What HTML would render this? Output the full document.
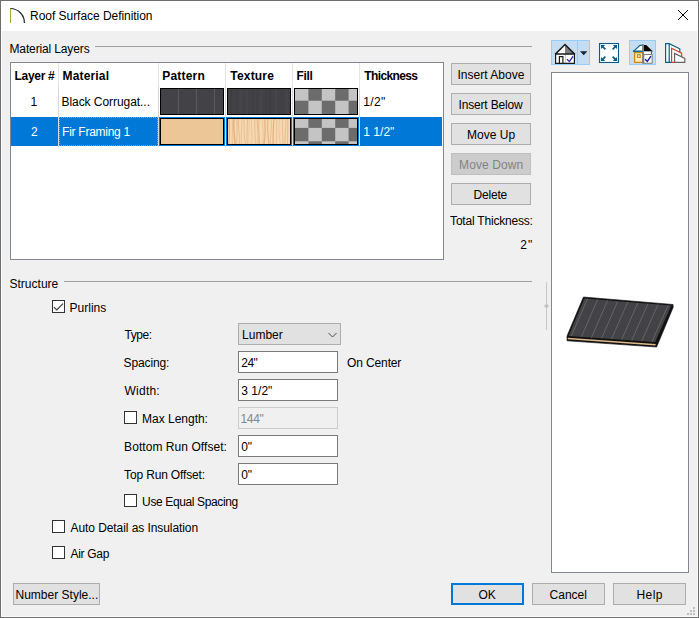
<!DOCTYPE html>
<html lang="en"><head><meta charset="utf-8"><title>Roof Surface Definition</title>
<style>
html,body{margin:0;padding:0;}
body{width:699px;height:618px;overflow:hidden;background:#f0f0f0;font:12px 'Liberation Sans',sans-serif;color:#000;position:relative;}
.win{position:absolute;left:0;top:0;width:697px;height:616px;border:1px solid #6e6e6e;background:#f0f0f0;}
.abs,.t,.win div,.win span,.win svg{position:absolute;}
.titlebar{left:1px;top:1px;width:697px;height:30px;background:#fff;}
.t{white-space:pre;line-height:14px;height:14px;font-size:12px;color:#000;}
.t.b{font-weight:bold;}
.t.w{color:#fff;}
.t.dis{color:#838383;}
.t.gr{color:#878787;}
.hline{height:1px;background:#a0a0a0;}
.btn{background:#e1e1e1;border:1px solid #adadad;box-sizing:border-box;}
.btn.dis{background:#cccccc;border-color:#bfbfbf;}
.btn.def{border:2px solid #0078d7;}
.inp{background:#fff;border:1px solid #7a7a7a;box-sizing:border-box;}
.inp.dis{background:#f0f0f0;border-color:#cccccc;}
.cb{width:13px;height:13px;box-sizing:border-box;border:1px solid #333;background:#fff;}
.table{left:10px;top:62px;width:434px;height:198px;box-sizing:border-box;border:1px solid #828790;background:#fff;}
.vl{width:1px;background:#d8d8d8;}
.sel{background:#0078d7;}
.sw{box-sizing:border-box;border:1px solid #000;width:64px;height:27px;overflow:hidden;}
.prev{left:551px;top:72px;width:138px;height:501px;box-sizing:border-box;border:1px solid #828790;background:#fff;}
.tb{box-sizing:border-box;background:#c5ddf2;border:1px solid #98ccf6;}
</style></head>
<body>
<div class="win">
<div class="root" style="left:-1px;top:-1px;width:699px;height:618px">
<div class="inset" style="left:1px;top:31px;width:695px;height:585px;border:1px solid #fcfcfc;border-top:none;border-right-color:#f8f8f8"></div>
<div class="titlebar">
</div>
<svg style="left:8px;top:6px" width="20" height="20" viewBox="0 0 20 20"><line x1="2.5" y1="3" x2="2.5" y2="17" stroke="#9ab72c" stroke-width="1"/><path d="M2.3 2.5 A14.2 14.2 0 0 1 16.4 17" fill="none" stroke="#2b2b2b" stroke-width="1.25"/></svg>
<span class="t " id="t_title" style="left:30.10px;top:9px;letter-spacing:-0.045px">Roof Surface Definition</span>
<svg style="left:677px;top:9px" width="12" height="12" viewBox="0 0 12 12"><path d="M1 1 L11 11 M11 1 L1 11" stroke="#000" stroke-width="1" fill="none"/></svg>
<span class="t " id="t_ml" style="left:9.50px;top:42px;letter-spacing:-0.136px">Material Layers</span>
<div class="hline" style="left:95px;top:46px;width:437px"></div>
<div class="table">
<div class="sel" style="left:0;top:54px;width:431px;height:29px"></div>
<div class="vl" style="left:47px;top:0;width:1px;height:24px;background:#e5e5e5"></div>
<div class="vl" style="left:47px;top:24px;width:1px;height:60px"></div>
<div class="vl" style="left:147px;top:0;width:1px;height:24px;background:#e5e5e5"></div>
<div class="vl" style="left:147px;top:24px;width:1px;height:60px"></div>
<div class="vl" style="left:214px;top:0;width:1px;height:24px;background:#e5e5e5"></div>
<div class="vl" style="left:214px;top:24px;width:1px;height:60px"></div>
<div class="vl" style="left:281px;top:0;width:1px;height:24px;background:#e5e5e5"></div>
<div class="vl" style="left:281px;top:24px;width:1px;height:60px"></div>
<div class="vl" style="left:348px;top:0;width:1px;height:24px;background:#e5e5e5"></div>
<div class="vl" style="left:348px;top:24px;width:1px;height:60px"></div>
<div class="focus" style="left:48px;top:54px;width:99px;height:29px;box-sizing:border-box;border:1px dotted #f58a2c"></div>
<div class="sw" style="left:149px;top:25px;background:#434246"><svg width="62" height="25" style="left:0;top:0"><path d="M17.5 0V25M35.5 0V25M53.5 0V25" stroke="#5c5b5c" stroke-width="1"/></svg></div>
<div class="sw" style="left:216px;top:25px;background:#424145"><svg style="left:0;top:0" width="62" height="25" viewBox="0 0 62 25"><rect width="62" height="25" fill="#424145"/><rect x="2" y="0" width="2" height="25" fill="#3e3d41"/><rect x="8" y="0" width="2" height="25" fill="#403f43"/><rect x="12" y="0" width="2" height="25" fill="#464549"/><rect x="18" y="0" width="2" height="25" fill="#464549"/><rect x="24" y="0" width="2" height="25" fill="#403f43"/><rect x="28" y="0" width="2" height="25" fill="#403f43"/><rect x="32" y="0" width="2" height="25" fill="#464549"/><rect x="37" y="0" width="2" height="25" fill="#403f43"/><rect x="41" y="0" width="2" height="25" fill="#3e3d41"/><rect x="47" y="0" width="2" height="25" fill="#464549"/><rect x="53" y="0" width="2" height="25" fill="#403f43"/><rect x="58" y="0" width="2" height="25" fill="#464549"/></svg></div>
<div class="sw" style="left:283px;top:25px"><svg style="left:0;top:0" width="62" height="25" viewBox="0 0 62 25"><rect width="62" height="25" fill="#c4c4c4"/><rect x="0.0" y="-15.1" width="13.4" height="13.4" fill="#6c6c6c"/><rect x="26.8" y="-15.1" width="13.4" height="13.4" fill="#6c6c6c"/><rect x="53.6" y="-15.1" width="13.4" height="13.4" fill="#6c6c6c"/><rect x="-13.4" y="-1.7" width="13.4" height="13.4" fill="#6c6c6c"/><rect x="13.4" y="-1.7" width="13.4" height="13.4" fill="#6c6c6c"/><rect x="40.2" y="-1.7" width="13.4" height="13.4" fill="#6c6c6c"/><rect x="67.0" y="-1.7" width="13.4" height="13.4" fill="#6c6c6c"/><rect x="0.0" y="11.7" width="13.4" height="13.4" fill="#6c6c6c"/><rect x="26.8" y="11.7" width="13.4" height="13.4" fill="#6c6c6c"/><rect x="53.6" y="11.7" width="13.4" height="13.4" fill="#6c6c6c"/><rect x="-13.4" y="25.1" width="13.4" height="13.4" fill="#6c6c6c"/><rect x="13.4" y="25.1" width="13.4" height="13.4" fill="#6c6c6c"/><rect x="40.2" y="25.1" width="13.4" height="13.4" fill="#6c6c6c"/><rect x="67.0" y="25.1" width="13.4" height="13.4" fill="#6c6c6c"/><rect x="0.0" y="38.5" width="13.4" height="13.4" fill="#6c6c6c"/><rect x="26.8" y="38.5" width="13.4" height="13.4" fill="#6c6c6c"/><rect x="53.6" y="38.5" width="13.4" height="13.4" fill="#6c6c6c"/></svg></div>
<div class="sw" style="left:149px;top:55px;background:#ecc697"></div>
<div class="sw" style="left:216px;top:55px;background:#f4d6ae"><svg style="left:0;top:0" width="62" height="25" viewBox="0 0 62 25"><rect width="62" height="25" fill="#f5d9b2"/><path d="M0.8 -1 C1.9 7 1.7 15 0.7 26" stroke="#e8b888" stroke-width="1.3" fill="none"/><path d="M4.0 -1 C5.0 7 3.9 15 4.3 26" stroke="#eabb8b" stroke-width="0.9" fill="none"/><path d="M6.2 -1 C5.0 7 6.3 15 7.1 26" stroke="#e2ab78" stroke-width="1.3" fill="none"/><path d="M9.0 -1 C9.5 7 9.4 15 8.2 26" stroke="#edc396" stroke-width="1.3" fill="none"/><path d="M10.9 -1 C9.5 7 12.2 15 11.2 26" stroke="#e6b382" stroke-width="0.7" fill="none"/><path d="M14.0 -1 C14.3 7 13.0 15 13.4 26" stroke="#edc396" stroke-width="1.1" fill="none"/><path d="M16.3 -1 C16.2 7 15.6 15 17.5 26" stroke="#e6b382" stroke-width="0.7" fill="none"/><path d="M19.7 -1 C19.1 7 18.9 15 19.2 26" stroke="#e2ab78" stroke-width="0.7" fill="none"/><path d="M21.7 -1 C20.5 7 21.1 15 20.7 26" stroke="#edc396" stroke-width="0.7" fill="none"/><path d="M23.7 -1 C22.7 7 25.0 15 23.6 26" stroke="#eabb8b" stroke-width="0.7" fill="none"/><path d="M27.0 -1 C25.7 7 27.5 15 27.7 26" stroke="#edc396" stroke-width="1.3" fill="none"/><path d="M29.3 -1 C28.8 7 30.8 15 30.0 26" stroke="#e2ab78" stroke-width="0.7" fill="none"/><path d="M31.4 -1 C29.9 7 31.3 15 31.4 26" stroke="#e6b382" stroke-width="0.9" fill="none"/><path d="M34.3 -1 C34.4 7 35.9 15 35.0 26" stroke="#edc396" stroke-width="0.9" fill="none"/><path d="M36.9 -1 C36.5 7 38.4 15 35.7 26" stroke="#e6b382" stroke-width="1.3" fill="none"/><path d="M40.1 -1 C39.1 7 39.7 15 40.9 26" stroke="#e6b382" stroke-width="1.1" fill="none"/><path d="M42.9 -1 C44.5 7 42.0 15 42.4 26" stroke="#e6b382" stroke-width="0.7" fill="none"/><path d="M46.0 -1 C45.6 7 44.6 15 45.3 26" stroke="#e2ab78" stroke-width="1.1" fill="none"/><path d="M48.8 -1 C48.4 7 49.2 15 48.0 26" stroke="#e8b888" stroke-width="0.7" fill="none"/><path d="M51.6 -1 C50.6 7 50.5 15 52.6 26" stroke="#edc396" stroke-width="0.9" fill="none"/><path d="M54.8 -1 C53.7 7 55.2 15 54.9 26" stroke="#eabb8b" stroke-width="0.9" fill="none"/><path d="M57.7 -1 C58.0 7 57.4 15 56.7 26" stroke="#edc396" stroke-width="1.3" fill="none"/><path d="M59.6 -1 C60.4 7 59.3 15 59.5 26" stroke="#eabb8b" stroke-width="1.1" fill="none"/></svg></div>
<div class="sw" style="left:283px;top:55px"><svg style="left:0;top:0" width="62" height="25" viewBox="0 0 62 25"><rect width="62" height="25" fill="#c4c4c4"/><rect x="0.0" y="-17.9" width="13.4" height="13.4" fill="#6c6c6c"/><rect x="26.8" y="-17.9" width="13.4" height="13.4" fill="#6c6c6c"/><rect x="53.6" y="-17.9" width="13.4" height="13.4" fill="#6c6c6c"/><rect x="-13.4" y="-4.5" width="13.4" height="13.4" fill="#6c6c6c"/><rect x="13.4" y="-4.5" width="13.4" height="13.4" fill="#6c6c6c"/><rect x="40.2" y="-4.5" width="13.4" height="13.4" fill="#6c6c6c"/><rect x="67.0" y="-4.5" width="13.4" height="13.4" fill="#6c6c6c"/><rect x="0.0" y="8.9" width="13.4" height="13.4" fill="#6c6c6c"/><rect x="26.8" y="8.9" width="13.4" height="13.4" fill="#6c6c6c"/><rect x="53.6" y="8.9" width="13.4" height="13.4" fill="#6c6c6c"/><rect x="-13.4" y="22.3" width="13.4" height="13.4" fill="#6c6c6c"/><rect x="13.4" y="22.3" width="13.4" height="13.4" fill="#6c6c6c"/><rect x="40.2" y="22.3" width="13.4" height="13.4" fill="#6c6c6c"/><rect x="67.0" y="22.3" width="13.4" height="13.4" fill="#6c6c6c"/><rect x="0.0" y="35.7" width="13.4" height="13.4" fill="#6c6c6c"/><rect x="26.8" y="35.7" width="13.4" height="13.4" fill="#6c6c6c"/><rect x="53.6" y="35.7" width="13.4" height="13.4" fill="#6c6c6c"/></svg></div>
</div>
<span class="t b" id="h_layer" style="left:14.50px;top:69px;letter-spacing:-0.300px">Layer #</span>
<span class="t b" id="h_mat" style="left:62.50px;top:69px;letter-spacing:0.171px">Material</span>
<span class="t b" id="h_pat" style="left:162.30px;top:69px;letter-spacing:0.183px">Pattern</span>
<span class="t b" id="h_tex" style="left:230.30px;top:69px;letter-spacing:0.183px">Texture</span>
<span class="t b" id="h_fill" style="left:296.50px;top:69px;letter-spacing:-0.300px">Fill</span>
<span class="t b" id="h_thk" style="left:364.30px;top:69px;letter-spacing:-0.625px">Thickness</span>
<span class="t " id="r1_n" style="left:30.60px;top:95px;letter-spacing:0.000px">1</span>
<span class="t " id="r1_m" style="left:61.50px;top:95px;letter-spacing:-0.056px">Black Corrugat...</span>
<span class="t " id="r1_t" style="left:363.30px;top:95px;letter-spacing:0.367px">1/2"</span>
<span class="t w" id="r2_n" style="left:31.05px;top:125px;letter-spacing:0.000px">2</span>
<span class="t w" id="r2_m" style="left:62.10px;top:125px;letter-spacing:-0.267px">Fir Framing 1</span>
<span class="t w" id="r2_t" style="left:363.30px;top:125px;letter-spacing:0.020px">1 1/2"</span>
<div class="btn " style="left:451px;top:63px;width:80px;height:22px"></div>
<span class="t " id="b_ia" style="left:457.50px;top:68px;letter-spacing:0.009px">Insert Above</span>
<div class="btn " style="left:451px;top:93px;width:80px;height:22px"></div>
<span class="t " id="b_ib" style="left:458.50px;top:98px;letter-spacing:-0.164px">Insert Below</span>
<div class="btn " style="left:451px;top:123px;width:80px;height:22px"></div>
<span class="t " id="b_mu" style="left:467.10px;top:128px;letter-spacing:0.000px">Move Up</span>
<div class="btn dis" style="left:451px;top:153px;width:80px;height:22px"></div>
<span class="t dis" id="b_md" style="left:459.10px;top:158px;letter-spacing:0.100px">Move Down</span>
<div class="btn " style="left:451px;top:183px;width:80px;height:22px"></div>
<span class="t " id="b_del" style="left:473.50px;top:188px;letter-spacing:-0.200px">Delete</span>
<span class="t " id="t_tt" style="left:450.10px;top:214px;letter-spacing:-0.200px">Total Thickness:</span>
<span class="t " id="t_2" style="left:520.30px;top:238px;letter-spacing:1.100px">2"</span>
<div class="tb" style="left:551px;top:40px;width:27px;height:25px"></div>
<div class="tb" style="left:577px;top:40px;width:13px;height:25px"></div>
<div class="tb" style="left:629px;top:40px;width:27px;height:25px"></div>
<svg class="icons" style="left:548px;top:36px" width="148" height="34" viewBox="548 36 148 34">
<g stroke-linejoin="miter" stroke-linecap="butt">
<!-- house with check -->
<rect x="555.5" y="54" width="19" height="9.5" fill="#fff"/>
<polygon points="555.5,54 565,44.5 565,54" fill="#fff"/>
<polygon points="565,44.5 574.5,54 565,54" fill="#7f7f7f"/>
<path d="M565.5 54.5V63" stroke="#c8c8c8" stroke-width="1" fill="none"/>
<path d="M555.1 54.4 L565 44.5 L574.9 54.4" stroke="#1a1a1a" stroke-width="1.5" fill="none"/>
<path d="M555.5 54 H574.5" stroke="#1a1a1a" stroke-width="1.5" fill="none"/><path d="M555.6 54 V63.5 M574.4 54 V63.5 M555 63.4 H575" stroke="#1a1a1a" stroke-width="1.2" fill="none"/>
<path d="M559.4 63.5 V56.6 H562.9 V63.5" stroke="#1a1a1a" stroke-width="1.2" fill="none"/>
<path d="M567 59.3 L569.4 61.6 L573 56.3" stroke="#2a22a8" stroke-width="1.3" fill="none"/>
<polygon points="580,51.2 587.4,51.2 583.7,55.2" fill="#222"/>
<!-- expand -->
<rect x="598" y="42" width="22" height="22" fill="#fff" opacity="0.6"/>
<rect x="599.5" y="43.5" width="19" height="19" fill="#fff" stroke="#0b5c88" stroke-width="1.15"/>
<g fill="#0b5c88" stroke="#0b5c88" stroke-width="1.7">
<path d="M602.4 46.4 L605.4 49.4"/><polygon points="600.9,44.9 605.1,45.1 601.1,49.1" stroke="none"/>
<path d="M615.6 46.4 L612.6 49.4"/><polygon points="617.1,44.9 612.9,45.1 616.9,49.1" stroke="none"/>
<path d="M602.4 59.6 L605.4 56.6"/><polygon points="600.9,61.1 605.1,60.9 601.1,56.9" stroke="none"/>
<path d="M615.6 59.6 L612.6 56.6"/><polygon points="617.1,61.1 612.9,60.9 616.9,56.9" stroke="none"/>
</g>
<!-- house color/check -->
<polygon points="633.4,51.5 639.9,45.3 643,45.3 643,51.5" fill="#fff"/>
<path d="M633.3 51.6 L639.9 45.3 H643" stroke="#10668c" stroke-width="1.3" fill="none"/>
<path d="M632.9 51.3 H643" stroke="#10668c" stroke-width="1.6" fill="none"/>
<rect x="634.6" y="52.6" width="8.4" height="9.8" fill="#fcecb0" stroke="#c98a14" stroke-width="1.3"/>
<rect x="637.5" y="54.7" width="2.7" height="2.7" fill="#fff" stroke="#c98a14" stroke-width="1.2"/>
<polygon points="643.8,45 646.2,45 652.9,51.5 643.8,51.5" fill="#000"/>
<rect x="643.8" y="51.5" width="7.4" height="3" fill="#fff"/>
<path d="M651.4 51.5 V54.4" stroke="#222" stroke-width="0.8" fill="none"/>
<rect x="643.8" y="54.4" width="8.3" height="8.8" fill="#fff" stroke="#707070" stroke-width="0.9"/>
<rect x="642.1" y="44" width="1.8" height="19.7" fill="#7f7f7f"/>
<path d="M645.1 59.2 L647.4 61.5 L650.9 56.2" stroke="#1c1c9c" stroke-width="1.4" fill="none"/>
<!-- layers -->
<polygon points="665.6,43.6 669.2,43.6 679.8,48.8 679.8,62.4 665.6,62.4" fill="#fff" stroke="#0b5c88" stroke-width="1.2"/>
<path d="M669.2 43.6 V62.4" stroke="#0b5c88" stroke-width="1.2" fill="none"/>
<polygon points="671.6,48.2 681.6,53.2 681.6,62.4 671.6,62.4" fill="#fff" stroke="#d8402c" stroke-width="1.2"/>
<polygon points="674.6,53.4 684.8,58.4 684.8,62.4 674.6,62.4" fill="#fff" stroke="#666" stroke-width="1.2"/>
</g></svg>
<div class="prev"></div>
<svg class="roof3d" style="left:560px;top:290px" width="122" height="66" viewBox="560 290 122 66"><polygon points="583.4,297.0 673.1,304.5 673.1,307.6 656.6,347.0 567.0,340.8 567.0,336.0" fill="#111" stroke="#111" stroke-width="0.6" stroke-linejoin="round"/><polygon points="584.4,298.4 671.3000000000001,305.59999999999997 655.2,342.1 568.5,335.90000000000003" fill="#434247"/><path d="M587.5 298.8 L571.4 336.0" stroke="#6a6964" stroke-width="0.9" fill="none"/><path d="M597.6 299.6 L581.5 336.7" stroke="#6a6964" stroke-width="0.9" fill="none"/><path d="M607.6 300.5 L591.5 337.5" stroke="#6a6964" stroke-width="0.9" fill="none"/><path d="M617.7 301.3 L601.6 338.3" stroke="#6a6964" stroke-width="0.9" fill="none"/><path d="M627.7 302.1 L611.6 339.0" stroke="#6a6964" stroke-width="0.9" fill="none"/><path d="M637.8 303.0 L621.6 339.8" stroke="#6a6964" stroke-width="0.9" fill="none"/><path d="M647.9 303.8 L631.7 340.6" stroke="#6a6964" stroke-width="0.9" fill="none"/><path d="M657.9 304.6 L641.7 341.3" stroke="#6a6964" stroke-width="0.9" fill="none"/><path d="M668.0 305.4 L651.8 342.1" stroke="#6a6964" stroke-width="0.9" fill="none"/><path d="M567.8 338.6 L655.6 344.8" stroke="#e2ba8a" stroke-width="1.5" fill="none"/></svg>
<span class="t " id="t_struct" style="left:9.50px;top:277px;letter-spacing:0.013px">Structure</span>
<div class="hline" style="left:64px;top:281px;width:468px"></div>
<div style="left:546px;top:282px;width:1px;height:48px;background:#c8c8c8"></div>
<svg style="left:543px;top:302px" width="7" height="8" viewBox="0 0 7 8"><polygon points="3.5,1.4 6,4 3.5,6.6 1,4" fill="#c2c2c2"/></svg>
<div class="cb" style="left:52px;top:300px"><svg style="left:0;top:0" width="11" height="11" viewBox="0 0 11 11"><path d="M0.9 6.1 L3.8 8.9 L10 2.6" stroke="#3c3c3c" stroke-width="1.2" fill="none"/></svg></div>
<span class="t " id="t_purl" style="left:69.50px;top:301px;letter-spacing:0.017px">Purlins</span>
<span class="t " id="t_type" style="left:124.50px;top:328px;letter-spacing:-0.450px">Type:</span>
<div class="btn" style="left:238px;top:323px;width:103px;height:22px"></div>
<span class="t " id="t_lumber" style="left:242.10px;top:328px;letter-spacing:-0.020px">Lumber</span>
<svg style="left:327px;top:331px" width="11" height="8" viewBox="0 0 11 8"><path d="M1.5 2 L5.5 6 L9.5 2" fill="none" stroke="#4a4a4a" stroke-width="1"/></svg>
<span class="t " id="t_spacing" style="left:123.50px;top:356px;letter-spacing:-0.114px">Spacing:</span>
<div class="inp" style="left:238px;top:351px;width:100px;height:22px"></div>
<span class="t " id="t_24" style="left:241.30px;top:356px;letter-spacing:-0.550px">24"</span>
<span class="t " id="t_oc" style="left:347.10px;top:356px;letter-spacing:-0.137px">On Center</span>
<span class="t " id="t_width" style="left:124.50px;top:384px;letter-spacing:0.240px">Width:</span>
<div class="inp" style="left:238px;top:379px;width:100px;height:22px"></div>
<span class="t " id="t_312" style="left:241.30px;top:384px;letter-spacing:0.020px">3 1/2"</span>
<div class="cb" style="left:124px;top:411px"></div>
<span class="t " id="t_maxl" style="left:142.10px;top:412px;letter-spacing:-0.020px">Max Length:</span>
<div class="inp dis" style="left:238px;top:407px;width:100px;height:22px"></div>
<span class="t gr" id="t_144" style="left:240.50px;top:412px;letter-spacing:-0.333px">144"</span>
<span class="t " id="t_bro" style="left:124.10px;top:440px;letter-spacing:0.059px">Bottom Run Offset:</span>
<div class="inp" style="left:238px;top:435px;width:100px;height:22px"></div>
<span class="t " id="t_0a" style="left:241.30px;top:440px;letter-spacing:-0.100px">0"</span>
<span class="t " id="t_tro" style="left:124.10px;top:468px;letter-spacing:-0.157px">Top Run Offset:</span>
<div class="inp" style="left:238px;top:463px;width:100px;height:22px"></div>
<span class="t " id="t_0b" style="left:241.30px;top:468px;letter-spacing:-0.100px">0"</span>
<div class="cb" style="left:124px;top:494px"></div>
<span class="t " id="t_ues" style="left:142.10px;top:495px;letter-spacing:-0.375px">Use Equal Spacing</span>
<div class="cb" style="left:52px;top:520px"></div>
<span class="t " id="t_adi" style="left:70.50px;top:521px;letter-spacing:-0.075px">Auto Detail as Insulation</span>
<div class="cb" style="left:52px;top:546px"></div>
<span class="t " id="t_ag" style="left:70.50px;top:547px;letter-spacing:-0.300px">Air Gap</span>
<div class="btn" style="left:13px;top:583px;width:87px;height:22px"></div>
<span class="t " id="b_ns" style="left:15.50px;top:588px;letter-spacing:0.007px">Number Style...</span>
<div class="btn def" style="left:451px;top:583px;width:73px;height:22px"></div>
<span class="t " id="b_ok" style="left:478.50px;top:588px;letter-spacing:0.000px">OK</span>
<div class="btn" style="left:532px;top:583px;width:73px;height:22px"></div>
<span class="t " id="b_cancel" style="left:549.50px;top:588px;letter-spacing:0.020px">Cancel</span>
<div class="btn" style="left:613px;top:583px;width:73px;height:22px"></div>
<span class="t " id="b_help" style="left:636.50px;top:588px;letter-spacing:0.400px">Help</span>
<svg class="grip" style="left:686px;top:606px" width="10" height="10" viewBox="0 0 10 10"><path d="M7 1h2v2h-2zM4 4h2v2h-2zM7 4h2v2h-2zM1 7h2v2h-2zM4 7h2v2h-2zM7 7h2v2h-2z" fill="#bfbfbf"/></svg>
</div></div>
</body></html>
